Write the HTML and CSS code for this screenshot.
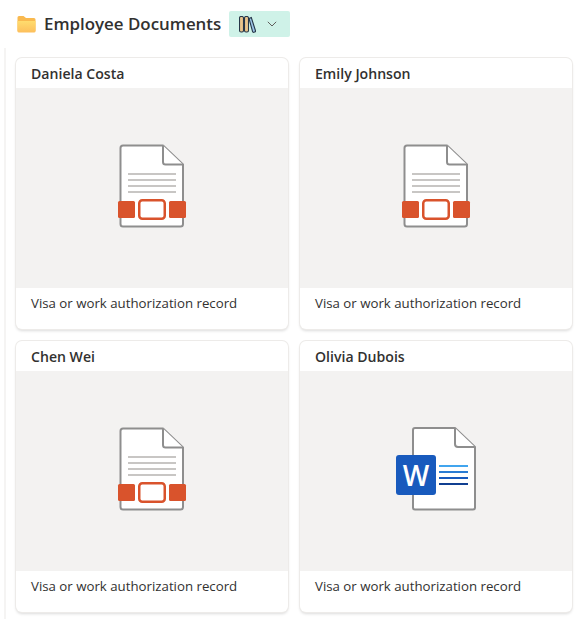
FILE: index.html
```html
<!DOCTYPE html>
<html lang="en">
<head>
    <meta charset="UTF-8">
    <meta name="viewport" content="width=device-width, initial-scale=1.0">
    <title>Employee Documents</title>
    <link rel="stylesheet" href="styles.css">
</head>
<body>
<svg class="defs" width="0" height="0">
    <symbol id="ppt" viewBox="0 0 70 84">
        <path d="M6 1.500h40l20 19v59.500a2.500 2.500 0 0 1-2.500 2.500h-57.500a2.500 2.500 0 0 1-2.500-2.500v-76a2.500 2.500 0 0 1 2.500-2.500z" fill="#fff" stroke="#8e8e8e" stroke-width="2" stroke-linejoin="round"/>
        <path d="M46 1.500v16.500a2.500 2.500 0 0 0 2.500 2.500h17.500" fill="#fff" stroke="#8e8e8e" stroke-width="2" stroke-linejoin="round"/>
        <path d="M11 30h48M11 36h48M11 42h48M11 48h48" stroke="#c8c6c4" stroke-width="2"/>
        <rect x="1" y="57" width="17" height="17" rx="1.500" fill="#d9532c"/>
        <rect x="52" y="57" width="17" height="17" rx="1.500" fill="#d9532c"/>
        <rect x="22.250" y="56.250" width="25.500" height="18.500" rx="3" fill="#fff" stroke="#d9532c" stroke-width="2.500"/>
    </symbol>
    <symbol id="word" viewBox="0 0 80 92">
        <path d="M19 5h40l20 19v60.500a2 2 0 0 1-2 2h-58a2 2 0 0 1-2-2v-77.500a2 2 0 0 1 2-2z" fill="#fff" stroke="#8e8e8e" stroke-width="2" stroke-linejoin="round"/>
        <path d="M59 5v16a3 3 0 0 0 3 3h17" fill="#fff" stroke="#8e8e8e" stroke-width="2" stroke-linejoin="round"/>
        <path d="M43 43h29" stroke="#41a5ee" stroke-width="2"/>
        <path d="M43 49h29" stroke="#2b7cd3" stroke-width="2"/>
        <path d="M43 55h29" stroke="#185abd" stroke-width="2"/>
        <path d="M43 61h29" stroke="#103f91" stroke-width="2"/>
        <rect x="0" y="32" width="40" height="40" rx="3" fill="#185abd"/>
    </symbol>
    <linearGradient id="folderFront" x1="0" y1="0" x2="0" y2="1">
        <stop offset="0" stop-color="#ffdc6e"/>
        <stop offset="1" stop-color="#fdbf5c"/>
    </linearGradient>
</svg>

<div class="header">
    <svg class="folder" width="19" height="18" viewBox="0 0 19 18">
        <path d="M.5 2.500a1.500 1.500 0 0 1 1.500-1.500h4.500l2.500 2h8a1.500 1.500 0 0 1 1.500 1.500v11a1.500 1.500 0 0 1-1.500 1.500h-15a1.500 1.500 0 0 1-1.500-1.500z" fill="#f9b94f"/>
        <path d="M.5 6h18v10a1.500 1.500 0 0 1-1.500 1.500h-15a1.500 1.500 0 0 1-1.500-1.500z" fill="url(#folderFront)"/>
    </svg>
    <h1>Employee Documents</h1>
    <button class="view-btn" type="button">
        <svg width="17" height="17" viewBox="0 0 17 17" fill="#e9c48c" stroke="#263648" stroke-width="1.100">
            <rect x=".5" y=".5" width="4" height="15.500" rx="1.500"/>
            <rect x="5.500" y=".5" width="4" height="15.500" rx="1.500"/>
            <path d="M10 2.500l2.300-1 4.200 13.300a1 1 0 0 1-.7 1.200l-1 .3a1 1 0 0 1-1.200-.7z" fill="#9cc4e6"/>
        </svg>
        <svg class="chevron" width="10" height="6" viewBox="0 0 10 6">
            <path d="M.8.800l4.200 4.200 4.200-4.200" fill="none" stroke="#605e5c" stroke-width="1"/>
        </svg>
    </button>
</div>

<div class="list">
    <div class="grid">
        <div class="card">
            <div class="card-name">Daniela Costa</div>
            <div class="card-preview"><svg class="icon-ppt"><use href="#ppt"/></svg></div>
            <div class="card-desc">Visa or work authorization record</div>
        </div>
        <div class="card">
            <div class="card-name">Emily Johnson</div>
            <div class="card-preview"><svg class="icon-ppt"><use href="#ppt"/></svg></div>
            <div class="card-desc">Visa or work authorization record</div>
        </div>
        <div class="card">
            <div class="card-name">Chen Wei</div>
            <div class="card-preview"><svg class="icon-ppt"><use href="#ppt"/></svg></div>
            <div class="card-desc">Visa or work authorization record</div>
        </div>
        <div class="card">
            <div class="card-name">Olivia Dubois</div>
            <div class="card-preview">
                <div class="word-wrap">
                    <svg class="icon-word"><use href="#word"/></svg>
                    <span class="word-letter">W</span>
                </div>
            </div>
            <div class="card-desc">Visa or work authorization record</div>
        </div>
    </div>
</div>
</body>
</html>
```

FILE: styles.css
```css
body {
    font-family: "Open Sans", "Noto Sans", Arial, sans-serif;
    background-color: #ffffff;
    color: #323130;
    margin: 0;
    padding: 0;
    height: 619px;
    overflow: hidden;
}

.defs {
    position: absolute;
}

.header {
    display: flex;
    align-items: center;
    height: 48px;
    padding-left: 17px;
}

.folder {
    margin-right: 8px;
}

h1 {
    font-size: 16.9px;
    font-weight: 600;
    margin: 0 8px 2px 0;
}

.view-btn {
    display: flex;
    align-items: center;
    justify-content: space-between;
    width: 61px;
    height: 26px;
    padding: 0 13px 0 10px;
    background-color: #cff2e8;
    border: none;
    border-radius: 2px;
}

.list {
    height: 561px;
    margin-left: 4px;
    border-left: 2px solid #f5f4f3;
    padding: 10px 0 0 10px;
}

.grid {
    display: grid;
    grid-template-columns: 272px 272px;
    gap: 12px;
}

.card {
    height: 271px;
    background-color: #ffffff;
    border-radius: 6px;
    box-shadow: 0 0 0 1px #edebe9, 0 2px 3px rgba(0, 0, 0, 0.14);
    overflow: hidden;
}

.card-name {
    height: 30px;
    padding: 6px 0 0 15px;
    box-sizing: border-box;
    line-height: 20px;
    font-size: 14.1px;
    font-weight: 600;
}

.card-preview {
    display: flex;
    justify-content: center;
    align-items: center;
    box-sizing: border-box;
    height: 200px;
    padding-bottom: 4px;
    background-color: #f3f2f1;
}

.card-desc {
    padding: 5px 0 0 15px;
    font-size: 13.25px;
    line-height: 20px;
}

.icon-ppt {
    width: 70px;
    height: 84px;
}

.word-wrap {
    position: relative;
    width: 80px;
    height: 92px;
}

.icon-word {
    width: 80px;
    height: 92px;
}

.word-letter {
    position: absolute;
    left: 0;
    top: 32px;
    width: 40px;
    line-height: 40px;
    text-align: center;
    font-family: "Open Sans", Arial, sans-serif;
    font-size: 28px;
    font-weight: 600;
    color: #ffffff;
}
```
